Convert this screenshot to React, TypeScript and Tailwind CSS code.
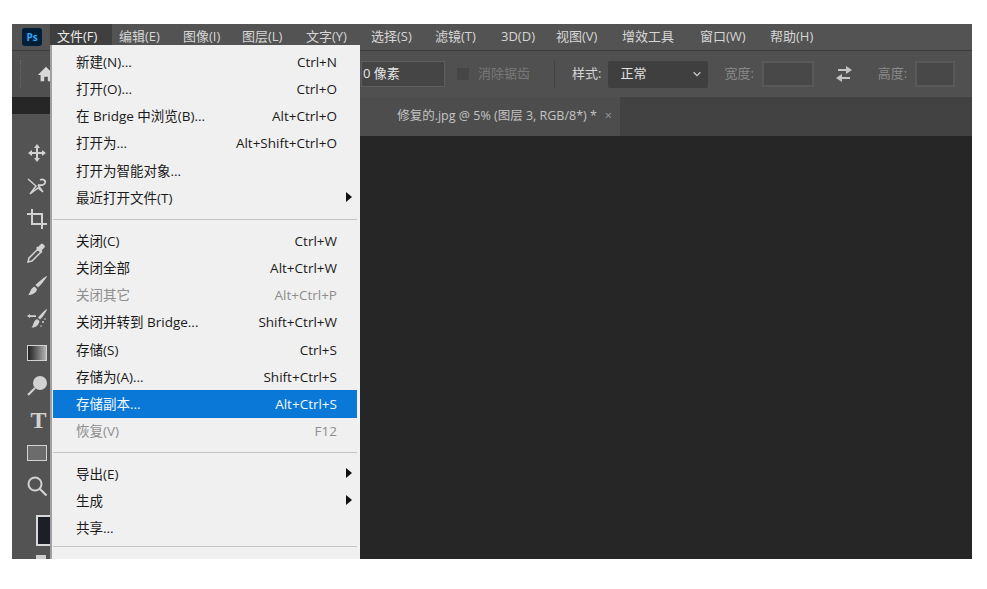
import { ReactNode } from 'react';

const font = 'font-["Open_Sans","Noto_Sans_CJK_SC",sans-serif]';

const menuBar = [
  { label: '文件(F)', w: 'w-[62px]', active: true },
  { label: '编辑(E)', w: 'w-[64px]' },
  { label: '图像(I)', w: 'w-[59px]' },
  { label: '图层(L)', w: 'w-[64px]' },
  { label: '文字(Y)', w: 'w-[65px]' },
  { label: '选择(S)', w: 'w-[64px]' },
  { label: '滤镜(T)', w: 'w-[66px]' },
  { label: '3D(D)', w: 'w-[55px]' },
  { label: '视图(V)', w: 'w-[66px]' },
  { label: '增效工具', w: 'w-[78px]' },
  { label: '窗口(W)', w: 'w-[70px]' },
  { label: '帮助(H)', w: 'w-[70px]' },
];

type Row = { label?: string; keys?: string; dim?: boolean; active?: boolean; sub?: boolean; gap?: string };

const menuRows: Row[] = [
  { label: '新建(N)...', keys: 'Ctrl+N' },
  { label: '打开(O)...', keys: 'Ctrl+O' },
  { label: '在 Bridge 中浏览(B)...', keys: 'Alt+Ctrl+O' },
  { label: '打开为...', keys: 'Alt+Shift+Ctrl+O' },
  { label: '打开为智能对象...' },
  { label: '最近打开文件(T)', sub: true },
  { gap: 'h-[15.8px]' },
  { label: '关闭(C)', keys: 'Ctrl+W' },
  { label: '关闭全部', keys: 'Alt+Ctrl+W' },
  { label: '关闭其它', keys: 'Alt+Ctrl+P', dim: true },
  { label: '关闭并转到 Bridge...', keys: 'Shift+Ctrl+W' },
  { label: '存储(S)', keys: 'Ctrl+S' },
  { label: '存储为(A)...', keys: 'Shift+Ctrl+S' },
  { label: '存储副本...', keys: 'Alt+Ctrl+S', active: true },
  { label: '恢复(V)', keys: 'F12', dim: true },
  { gap: 'h-[15.4px]' },
  { label: '导出(E)', sub: true },
  { label: '生成', sub: true },
  { label: '共享...' },
  { gap: 'h-[10px]' },
];

function Tool({ children }: { children: ReactNode }) {
  return <div className="flex h-[33.4px] w-full items-center justify-center pl-[12px]">{children}</div>;
}

function Icon({ children }: { children: ReactNode }) {
  return (
    <svg viewBox="0 0 22 22" className="h-[22px] w-[22px] text-[#d2d2d2]" fill="currentColor">
      {children}
    </svg>
  );
}

function Toolbar() {
  return (
    <div className="mt-[17px] flex w-[38px] shrink-0 flex-col overflow-hidden bg-[#535353] pt-[22px]">
      <Tool>
        <Icon>
          <path d="M10 6h2v4h4V8l4 3-4 3v-2h-4v4h2l-3 4-3-4h2v-4H6v2l-4-3 4-3v2h4V6H8l3-4 3 4h-4z" />
        </Icon>
      </Tool>
      <Tool>
        <Icon>
          <path d="M14 5c3-1.500 6 .5 5 3-.8 2-4 2.500-7 2" fill="none" stroke="currentColor" strokeWidth="1.800" />
          <path d="M2 4l8 7-6 8 8-6 5 4-5-7" fill="none" stroke="currentColor" strokeWidth="1.500" />
        </Icon>
      </Tool>
      <Tool>
        <Icon>
          <path d="M6 1v15h15" fill="none" stroke="currentColor" strokeWidth="2" />
          <path d="M1 6h15v15" fill="none" stroke="currentColor" strokeWidth="2" />
        </Icon>
      </Tool>
      <Tool>
        <Icon>
          <path d="M2 20l1-4 9-9 3 3-9 9z" fill="none" stroke="currentColor" strokeWidth="1.500" />
          <path d="M12 5l3-3c1.500-1.500 5 2 3.500 3.500l-3 3 1 1-1.500 1.500-5-5 1.500-1.500z" />
        </Icon>
      </Tool>
      <Tool>
        <Icon>
          <path d="M21 1c.5.500-6 9-9 11.500L9.500 10C12 7 20.500.5 21 1z" />
          <path d="M8.500 11.500l2.500 2.500c-.5 4-5 6-9 6 2-1 2-6.500 6.500-8.500z" />
        </Icon>
      </Tool>
      <Tool>
        <Icon>
          <path d="M21 1c.5.500-4 8-7 10.500L12 9.500C14 7 20.500.5 21 1z" />
          <path d="M11 11l2.500 2c-.5 4-4 7-8 6.500 2-1.500 1.500-6.500 5.500-8.500z" />
          <path d="M1 8l3-2v1.200h6V9H4v1z" />
          <circle cx="17" cy="14" r="1" />
          <circle cx="19" cy="11" r=".8" />
          <circle cx="15" cy="18" r=".8" />
        </Icon>
      </Tool>
      <Tool>
        <div className="h-[16px] w-[20px] border-[1.5px] border-[#d2d2d2] bg-gradient-to-r from-[#222222] to-[#b5b5b5]" />
      </Tool>
      <Tool>
        <Icon>
          <circle cx="14" cy="8" r="7" />
          <path d="M9 13l-7 7" stroke="currentColor" strokeWidth="2.200" />
        </Icon>
      </Tool>
      <div className="flex h-[33.4px] w-full items-center justify-center pl-[15px] font-['Liberation_Serif',serif] text-[24px] font-bold leading-none text-[#d2d2d2]">
        T
      </div>
      <Tool>
        <div className="h-[16px] w-[20px] border-[1.5px] border-[#d2d2d2] bg-[#6c6c6c]" />
      </Tool>
      <Tool>
        <Icon>
          <circle cx="9" cy="9" r="6.500" fill="none" stroke="currentColor" strokeWidth="2" />
          <path d="M13.500 13.500l7 7" stroke="currentColor" strokeWidth="2.200" />
        </Icon>
      </Tool>
      <div className="mt-[12px] ml-[24px] h-[31px] w-[16px] shrink-0 border-2 border-[#d8d8d8] bg-[#1c2026]" />
      <div className="mt-[9px] ml-[24px] h-[4px] w-[10px] shrink-0 bg-[#cfcfcf]" />
    </div>
  );
}

function FileMenu() {
  return (
    <div className="absolute top-[21px] left-[38px] z-10 flex h-[520px] w-[310px] flex-col border-l-2 border-[#a0a0a0] bg-[#f0f0f0] pt-[3.400px] pl-[1px] pr-[3px] text-[13.500px] text-[#1a1a1a]">
      {menuRows.map((r, i) => {
        if (r.gap) {
          return (
            <div key={i} className={`flex shrink-0 items-center ${r.gap === 'h-[10px]' ? 'h-[10px]' : r.gap === 'h-[15.8px]' ? 'h-[15.8px]' : 'h-[15.4px]'}`}>
              <div className="h-[1px] w-full bg-[#c4c4c4]" />
            </div>
          );
        }
        return (
          <div
            key={i}
            className={`relative flex h-[27.2px] shrink-0 items-center justify-between pr-[20px] pl-[23px] ${
              r.active ? 'bg-[#0a78d7] text-[#f4f9fd]' : r.dim ? 'text-[#8d8d8d]' : ''
            }`}
          >
            <span className="whitespace-nowrap">{r.label}</span>
            {r.keys && <span className="whitespace-nowrap">{r.keys}</span>}
            {r.sub && (
              <span className="absolute top-[8px] right-[5px] h-0 w-0 border-y-[5.500px] border-l-[6px] border-y-transparent border-l-[#111111]" />
            )}
          </div>
        );
      })}
    </div>
  );
}

export default function App() {
  return (
    <div className={`h-[589px] w-[987px] bg-white pt-[24px] pl-[12px] ${font}`}>
      <div className="relative flex h-[535px] w-[960px] flex-col overflow-hidden bg-[#262626]">
        <div className="flex h-[26px] shrink-0 items-center bg-[#535353] text-[13px] text-[#d6d6d6]">
          <div className="flex w-[38px] shrink-0 justify-center pl-[2px]">
            <div className="flex h-[18px] w-[20px] items-center justify-center rounded-[3px] bg-[#001e36] text-[10px] font-bold leading-none text-[#31a8ff]">
              Ps
            </div>
          </div>
          {menuBar.map(m => (
            <div
              key={m.label}
              className={`flex h-full shrink-0 items-center pl-[7px] whitespace-nowrap ${m.w} ${m.active ? 'bg-[#3f3f3f] text-[#ececec]' : ''}`}
            >
              {m.label}
            </div>
          ))}
        </div>

        <div className="flex h-[47px] shrink-0 items-center border-t border-[#3c3c3c] bg-[#505050] text-[13px] text-[#d4d4d4]">
          <div className="ml-[8px] h-[28px] w-0 border-l border-dotted border-[#6a6a6a]" />
          <svg viewBox="0 0 20 20" className="ml-[16px] h-[18px] w-[18px] shrink-0 text-[#d8d8d8]" fill="currentColor">
            <path d="M10 2L1 11h3v7h4v-5h4v5h4v-7h3z" />
          </svg>
          <div className="ml-[306px] flex h-[26px] w-[84px] shrink-0 items-center border border-[#5e5e5e] bg-[#454545] pl-[1px] text-[#e6e6e6]">
            0 像素
          </div>
          <div className="ml-[12px] h-[12px] w-[12px] shrink-0 bg-[#464646]" />
          <span className="ml-[9px] text-[#787878]">消除锯齿</span>
          <div className="ml-[24px] h-[28px] w-0 border-l border-[#434343]" />
          <span className="ml-[17px]">样式:</span>
          <div className="ml-[7px] flex h-[27px] w-[100px] shrink-0 items-center justify-between rounded-[2px] bg-[#3f3f3f] pr-[6px] pl-[12px] text-[#e2e2e2]">
            正常
            <svg viewBox="0 0 12 12" className="h-[10px] w-[10px] text-[#c8c8c8]" fill="none" stroke="currentColor" strokeWidth="1.600">
              <path d="M2 4l4 4 4-4" />
            </svg>
          </div>
          <span className="ml-[16px] text-[#8a8a8a]">宽度:</span>
          <div className="ml-[8px] h-[26px] w-[52px] shrink-0 border-2 border-[#585858] bg-[#484848]" />
          <svg viewBox="0 0 20 20" className="ml-[20px] h-[20px] w-[20px] shrink-0 text-[#c4c4c4]" fill="currentColor">
            <path d="M12 2l6 4-6 4V7H4V5h8zM8 10l-6 4 6 4v-3h8v-2H8z" />
          </svg>
          <span className="ml-[24px] text-[#8a8a8a]">高度:</span>
          <div className="ml-[8px] h-[26px] w-[40px] shrink-0 border-2 border-[#585858] bg-[#484848]" />
        </div>

        <div className="flex min-h-0 flex-1">
          <Toolbar />
          <div className="flex min-w-0 flex-1 flex-col">
            <div className="flex h-[39px] shrink-0 bg-[#424242]">
              <div className="flex w-[570px] shrink-0 items-center justify-end overflow-hidden bg-[#4d4d4d] pr-[8px] text-[12.500px] whitespace-nowrap text-[#c4c4c4]">
                修复的.jpg @ 5% (图层 3, RGB/8*) *<span className="ml-[8px] text-[#9a9a9a]">×</span>
              </div>
            </div>
            <div className="flex-1 bg-[#262626]" />
          </div>
        </div>

        <FileMenu />
      </div>
    </div>
  );
}
